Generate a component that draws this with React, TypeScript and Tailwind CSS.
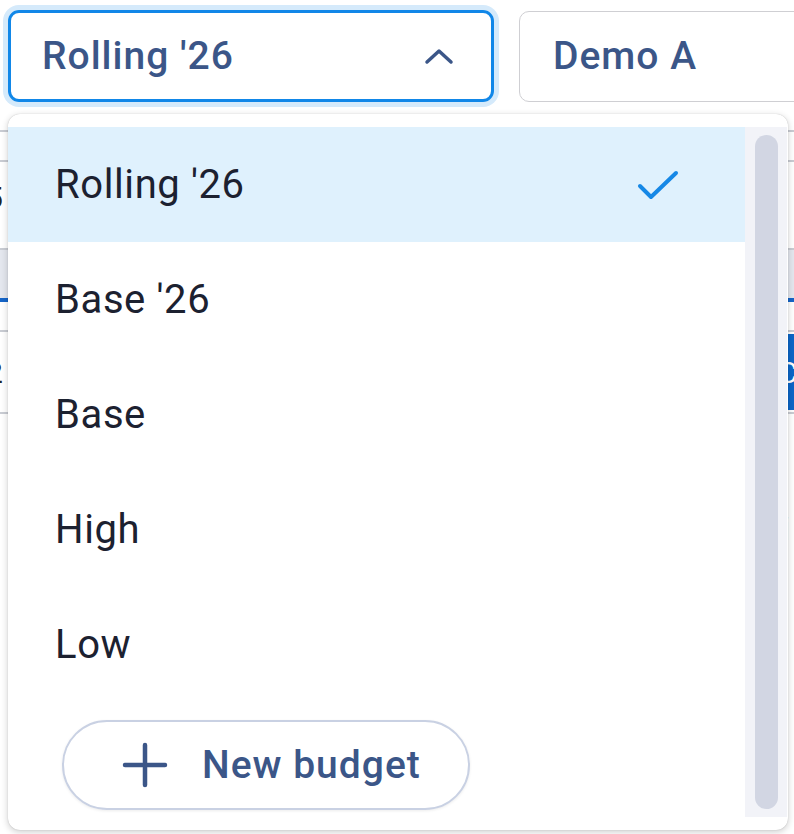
import React from "react";

const items = ["Rolling '26", "Base '26", "Base", "High", "Low"];

export default function App() {
  return (
    <div
      className="relative w-[794px] h-[834px] overflow-hidden bg-white"
      style={{ fontFamily: "Roboto, 'Noto Sans', sans-serif" }}
    >
      {/* header with selects */}
      <div className="flex gap-[25px] pl-[8px] pt-[10px] h-[114px]">
        <div className="shrink-0 w-[486px] h-[92px] rounded-[11px] border-[3px] border-[#1187e8] ring-[5px] ring-[#d5eafb] flex items-center justify-between pl-[31px] pr-[37px]">
          <span className="text-[39px] font-medium text-[#3b5688] tracking-[1px]">Rolling '26</span>
          <svg width="30" height="18" viewBox="0 0 30 18" fill="none">
            <path d="M3 15 L15 4 L27 15" stroke="#3b5688" strokeWidth="3.5" strokeLinecap="round" strokeLinejoin="round" />
          </svg>
        </div>
        <div className="shrink-0 w-[320px] h-[91px] mt-[1px] rounded-[10px] border-[1.5px] border-[#cfcfd3] flex items-center pl-[33px]">
          <span className="text-[39px] font-medium text-[#3b5688] tracking-[1px]">Demo A</span>
        </div>
      </div>

      {/* underlying page content */}
      <div className="relative">
        <div className="h-[18px] border-b-2 border-[#c9ccd3]" />
        <div className="h-[30px] border-b-2 border-[#c9ccd3]" />
        <div className="h-[70px] flex items-center text-[30px] text-[#222] -ml-[14px]">5</div>
        <div className="h-[18px] border-b-2 border-[#c9ccd3]" />
        <div className="h-[52px] bg-[#e4e7ee] border-b-[4px] border-[#1565c8]" />
        <div className="h-[30px] border-b-2 border-[#c9ccd3]" />
        <div className="h-[80px] flex items-center justify-between">
          <span className="text-[30px] text-[#222] -ml-[14px]">2</span>
          <span className="h-[76px] w-[40px] bg-[#0b66c8] text-white text-[30px] flex items-center pl-[4px] -mr-[20px]">C</span>
        </div>
        <div className="h-[2px] bg-[#c9ccd3]" />
        <div className="h-[140px] flex items-end justify-end pr-[4px]">
          <span className="text-[34px] text-[#5c6680]">i</span>
        </div>
      </div>

      {/* dropdown menu overlay */}
      <div className="absolute left-[8px] top-[114px] w-[780px] h-[716px] bg-white rounded-[12px] shadow-[0_2px_7px_rgba(0,0,0,0.2),0_0_1px_rgba(0,0,0,0.25)] flex py-[13px]">
        <div className="flex-1 flex flex-col">
          {items.map((it, i) => (
            <div
              key={it}
              className={
                "h-[115px] shrink-0 flex items-center justify-between pl-[47px] pr-[66px] " +
                (i === 0 ? "bg-[#dff1fd]" : "")
              }
            >
              <span className="text-[40px] text-[#1c2130] tracking-[0.6px]">{it}</span>
              {i === 0 && (
                <svg width="42" height="32" viewBox="0 0 42 32" fill="none">
                  <path d="M3 17 L14 28 L39 4" stroke="#1688e6" strokeWidth="4" strokeLinecap="round" strokeLinejoin="round" />
                </svg>
              )}
            </div>
          ))}
          <div className="mt-[18px] ml-[54px] w-[408px] h-[90px] rounded-full border-2 border-[#c9d1e3] shadow-[0_1px_3px_rgba(0,0,0,0.08)] flex items-center pl-[58px] gap-[34px]">
            <svg width="46" height="46" viewBox="0 0 46 46" fill="none">
              <path d="M23 3 V43 M3 23 H43" stroke="#3b5688" strokeWidth="4.5" strokeLinecap="round" />
            </svg>
            <span className="text-[39px] font-medium text-[#3b5688] tracking-[1px]">New budget</span>
          </div>
        </div>
        <div className="w-[42px] mr-[1px] bg-[#f2f3f8] flex justify-center py-[8px]">
          <div className="w-[23px] h-full rounded-full bg-[#d2d6e3]" />
        </div>
      </div>
    </div>
  );
}
